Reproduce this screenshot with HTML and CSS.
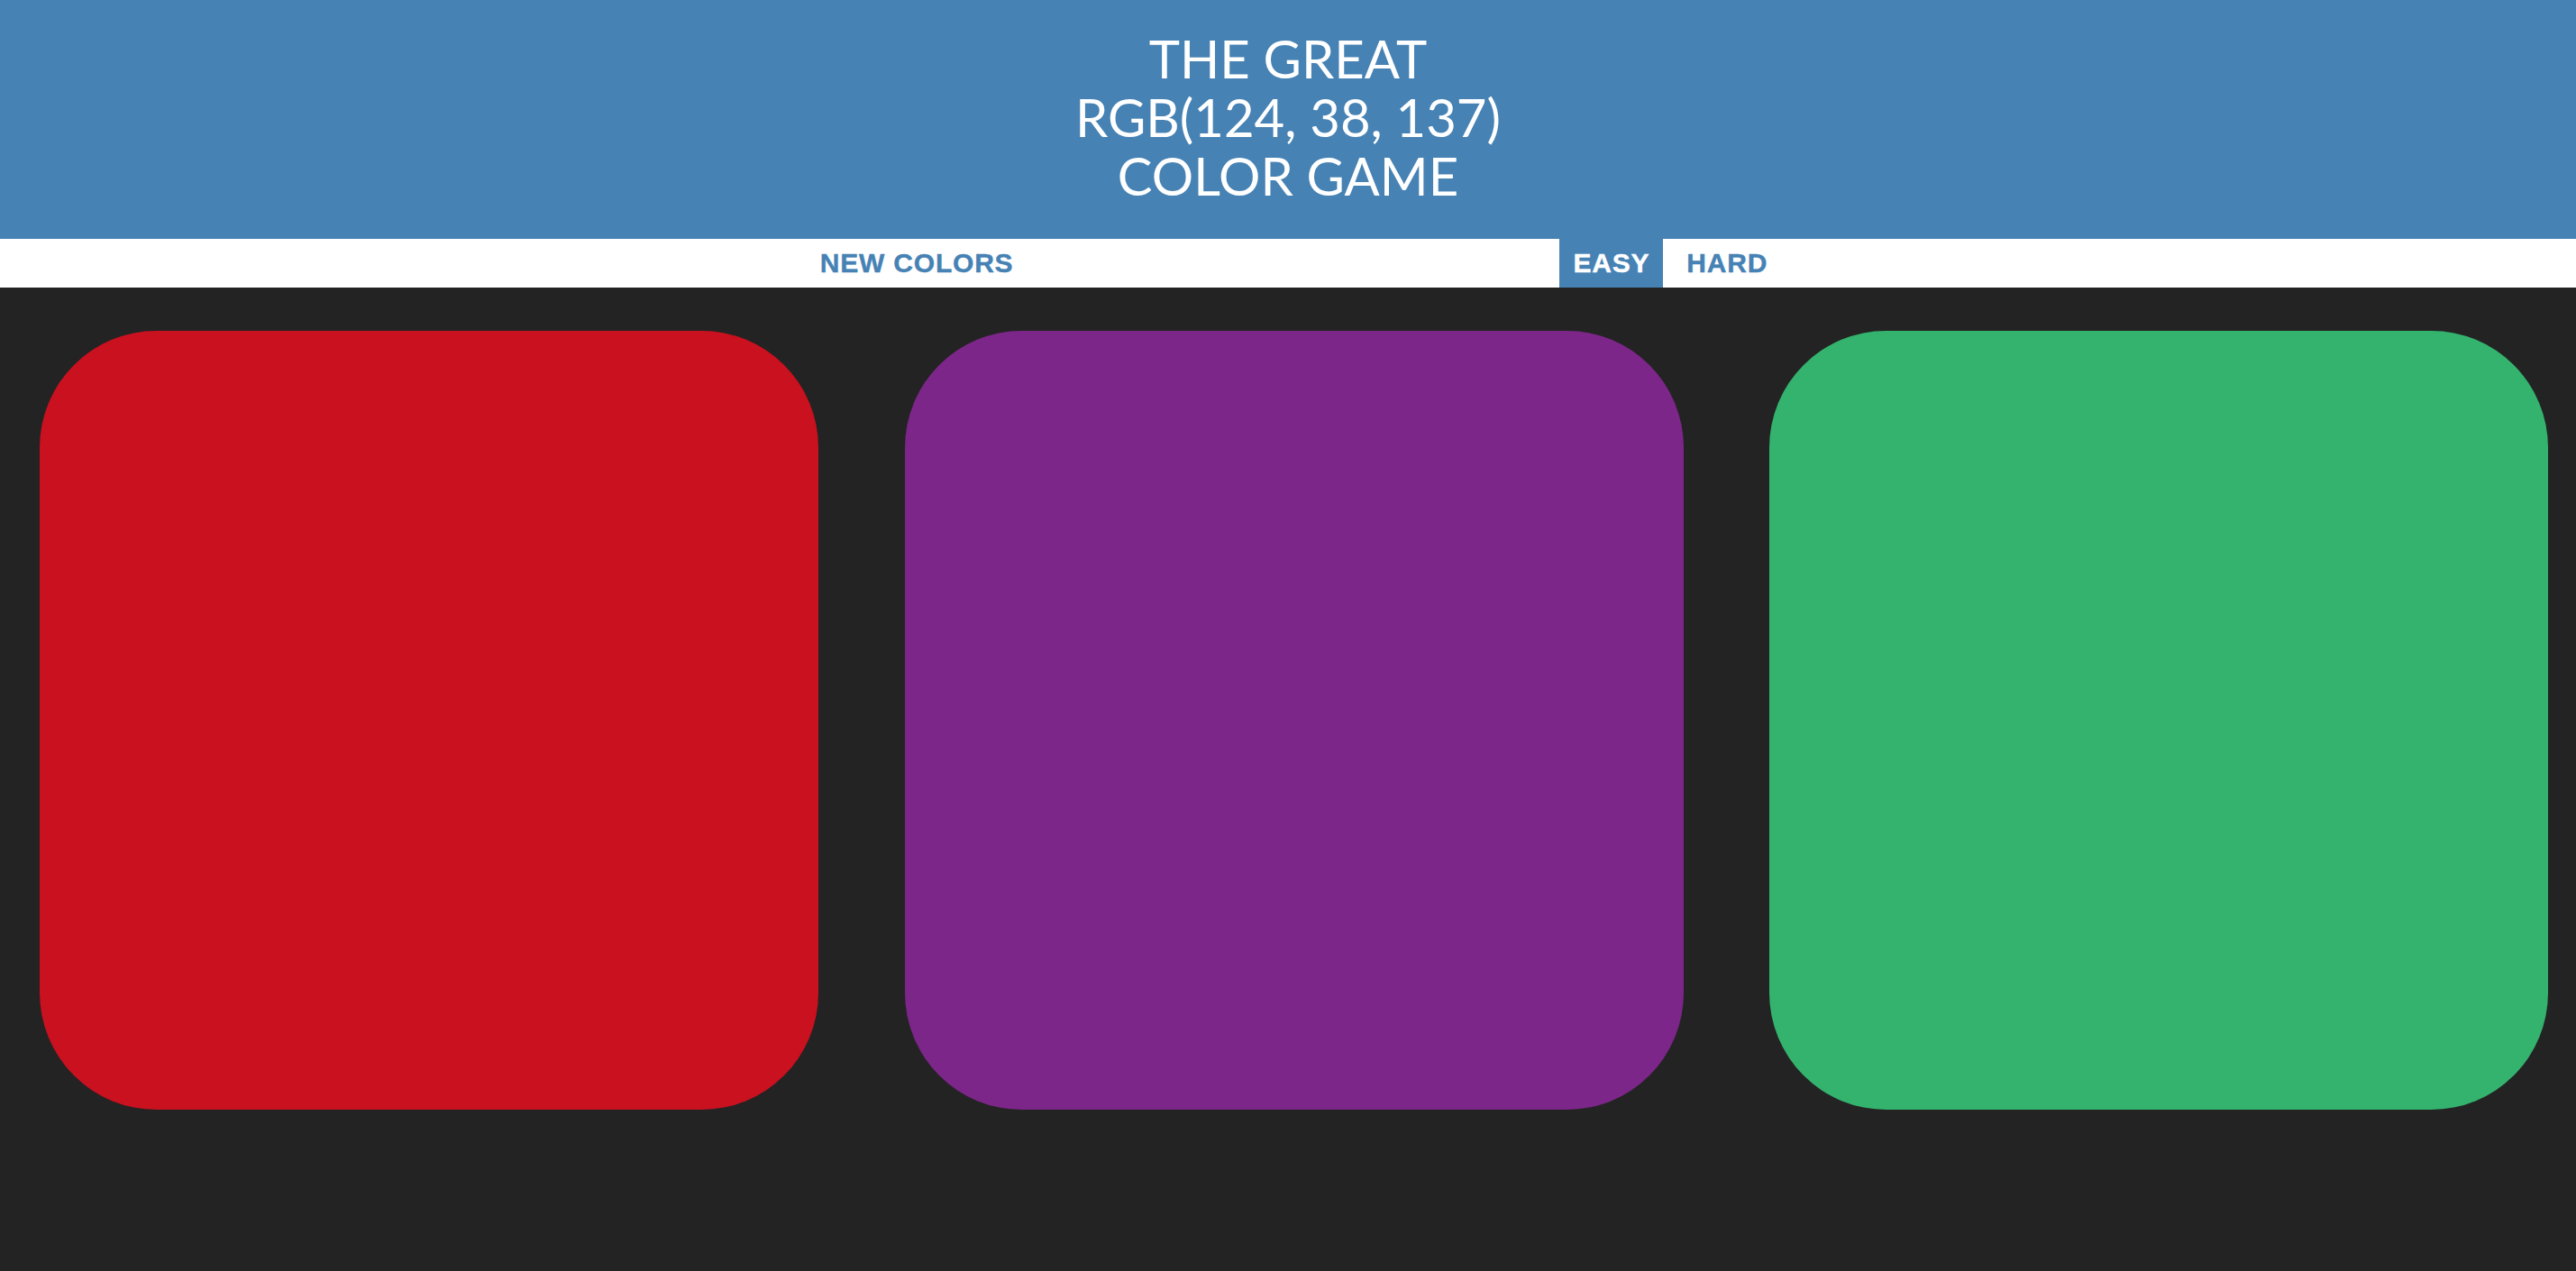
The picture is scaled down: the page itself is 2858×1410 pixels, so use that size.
FILE: index.html
```html
<!DOCTYPE html>
<html lang="en">
<head>
<meta charset="utf-8">
<title>Color Game</title>
<link rel="stylesheet" href="styles.css">
</head>
<body>
  <h1 class="title">The Great<br><span class="color-display">RGB(124, 38, 137)</span><br>Color Game</h1>
  <div class="stripe">
    <button class="btn btn-reset">New Colors</button>
    <span class="message"></span>
    <button class="btn btn-mode selected">Easy</button>
    <button class="btn btn-mode">Hard</button>
  </div>
  <div class="container">
    <div class="square sq-red"></div>
    <div class="square sq-purple"></div>
    <div class="square sq-green"></div>
  </div>
</body>
</html>
```

FILE: styles.css
```css
html, body {
  margin: 0;
  padding: 0;
}
body {
  background: #232323;
  font-family: "Lato", "Liberation Sans", sans-serif;
}
.title {
  margin: 0;
  background: #4682b4;
  color: #ffffff;
  text-align: center;
  text-transform: uppercase;
  font-weight: 400;
  font-size: 58px;
  line-height: 65px;
  padding: 32px 0 38px;
  height: 195px;
}
.stripe {
  background: #ffffff;
  height: 54px;
  display: flex;
  justify-content: center;
  align-items: stretch;
  gap: 11px;
  padding-left: 13px;
}
.btn {
  border: none;
  background: none;
  margin: 0;
  padding: 0 15px;
  font-family: "Liberation Sans", Arial, sans-serif;
  font-weight: 700;
  font-size: 30px;
  letter-spacing: 0.8px;
  text-transform: uppercase;
  color: #4682b4;
  height: 54px;
  -webkit-text-stroke: 0.4px currentColor;
}
.btn.selected {
  background: #4682b4;
  color: #ffffff;
}
.message {
  display: block;
  width: 20%;
}
.container {
  display: flex;
  justify-content: space-between;
  padding: 48px 31px 0 44px;
}
.square {
  width: 864px;
  height: 864px;
  border-radius: 15%;
}
.sq-red { background: #c9111f; }
.sq-purple { background: #7c2689; }
.sq-green { background: #34b36e; }
```
